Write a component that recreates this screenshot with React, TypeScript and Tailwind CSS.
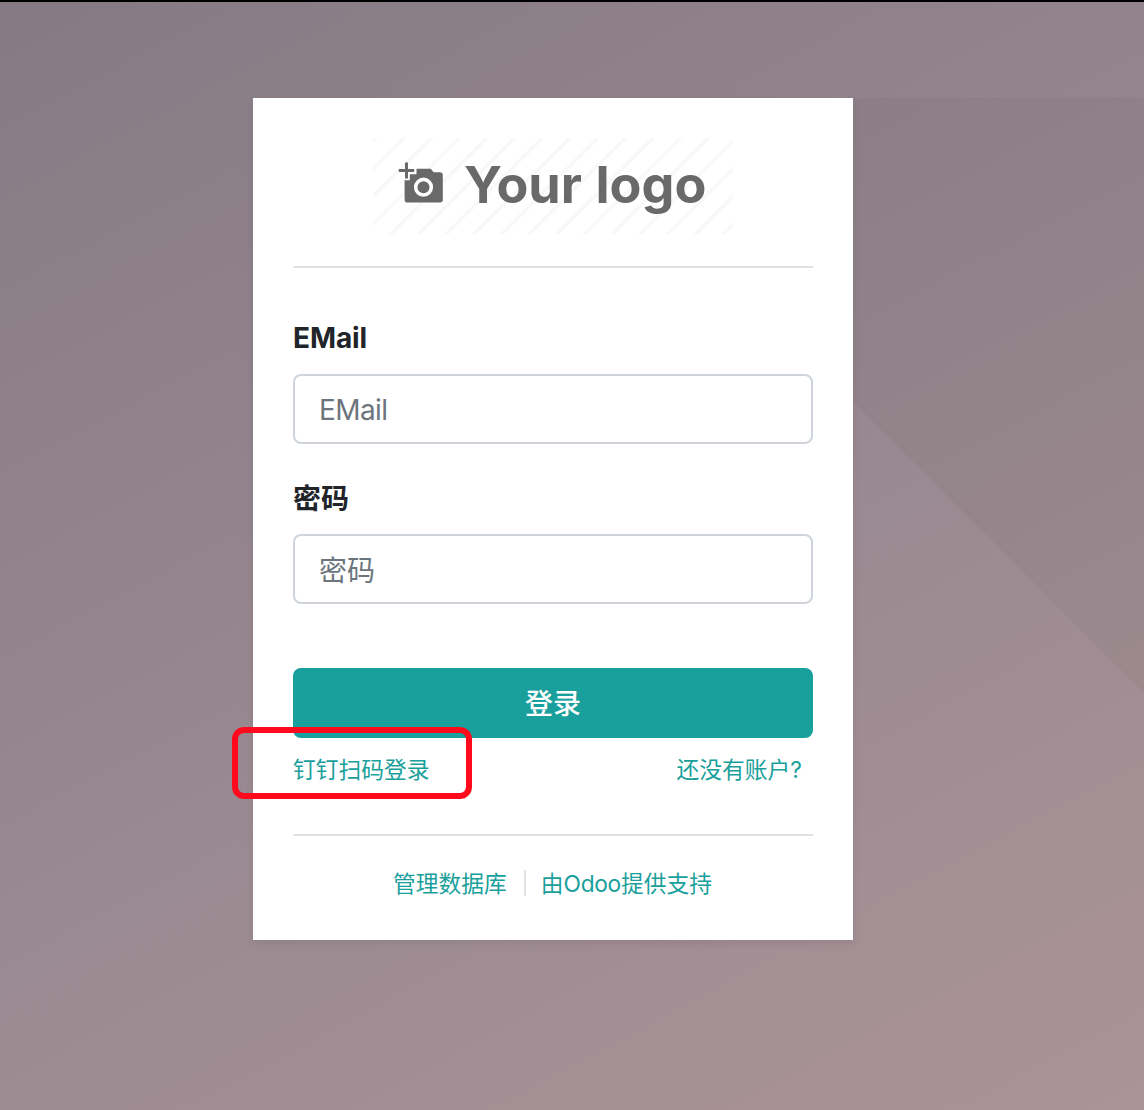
const sans = "font-['Inter','Noto_Sans_CJK_SC',sans-serif]";

function LogoPlaceholder() {
  return (
    <svg width="360" height="96" viewBox="0 0 360 96" className="block" aria-label="Your logo">
      <defs>
        <pattern id="stripes" width="27.7" height="27.7" patternUnits="userSpaceOnUse" x="3">
          <path d="M-4 31.7 31.7 -4 M-4 4 4 -4 M23.7 31.7 31.7 23.7" stroke="#f8f8f8" strokeWidth="3.4" />
        </pattern>
      </defs>
      <rect width="360" height="96" fill="url(#stripes)" />
      <g fill="#696969" className="blur-[0.5px]">
        <path d="M32 24.500h3v6.500h6.200v3h-6.200v6.600h-3v-6.600h-6.200v-3h6.200z" />
        <path
          fillRule="evenodd"
          d="M43.5 30.700h14.300l2.800 3.600h6.400a2.800 2.800 0 0 1 2.800 2.800v24.600a2.800 2.800 0 0 1-2.800 2.800H34.400a2.800 2.800 0 0 1-2.800-2.800V42.300h5.200v-6.100h6.700zM50.500 39.600a9.600 9.600 0 1 0 0 19.200a9.600 9.600 0 1 0 0-19.200z"
        />
        <circle cx="50.500" cy="49.200" r="6" />
        <g fontSize="50.5" fontWeight="700" fontFamily="Inter, sans-serif">
          <text x="91" y="65" textLength="118" lengthAdjust="spacingAndGlyphs">Your</text>
          <text x="222.500" y="65" textLength="111" lengthAdjust="spacingAndGlyphs">logo</text>
        </g>
      </g>
    </svg>
  );
}

function Field({ label, type }: { label: string; type: string }) {
  const isText = type === "text";
  return (
    <label className="block">
      <span className={`block h-[42px] text-[28px] leading-[42px] font-bold text-[#212529] ${isText ? "tracking-[-0.1px]" : "pt-px"}`}>
        {label}
      </span>
      <input
        type={type}
        placeholder={label}
        className={`mt-[15px] block h-[70px] w-full rounded-[8px] border-2 border-[#ced4da] bg-white px-6 text-[28px] text-[#495057] outline-none placeholder:text-[#6c757d] ${
          isText ? "pt-0.5 placeholder:tracking-[-0.6px]" : "pt-[3px]"
        }`}
      />
    </label>
  );
}

export default function App() {
  return (
    <div className={`relative h-[1110px] w-[1144px] overflow-hidden border-t-2 border-black bg-[linear-gradient(152deg,#857a84,#9a8a91_57%,#ab9397)] pt-24 ${sans}`}>
      <div className="absolute top-24 right-0 h-[595px] w-[595px] bg-black/[0.035] [clip-path:polygon(0_0,100%_0,100%_100%)]" />
      <main className="relative ml-[253px] h-[842px] w-[600px] bg-white px-10 pt-10 shadow-[0_4px_8px_rgba(0,0,0,0.075)]">
        <div className="flex h-[130px] justify-center border-b-2 border-[#dee2e6]">
          <LogoPlaceholder />
        </div>
        <form className="pt-[49px]">
          <Field label="EMail" type="text" />
          <div className="h-[33px]" />
          <Field label="密码" type="password" />
          <button type="button" className="mt-16 block h-[70px] w-full rounded-[8px] bg-[#1aa09c] pt-0.5 text-[28px] font-medium text-white">
            登录
          </button>
          <div className="flex h-[66px] justify-between pr-[11px] text-[22.75px] leading-[64px] text-[#1aa09c]">
            <a className="relative">
              钉钉扫码登录
              <span className="absolute -top-[11px] -left-[61px] h-[72px] w-[240px] rounded-[12px] border-6 border-[#ff0a1c]" />
            </a>
            <a>还没有账户?</a>
          </div>
        </form>
        <footer className="mt-[30px] flex justify-center border-t-2 border-[#dee2e6] pt-8 pr-px text-[22.75px] leading-8 text-[#1aa09c]">
          <a>管理数据库</a>
          <span className="mr-[15px] ml-[17px] mt-0.5 h-[26px] w-0.5 bg-[#dee2e6]" />
          <a>由<span className="tracking-[-0.3px]">Odoo</span>提供支持</a>
        </footer>
      </main>
    </div>
  );
}
